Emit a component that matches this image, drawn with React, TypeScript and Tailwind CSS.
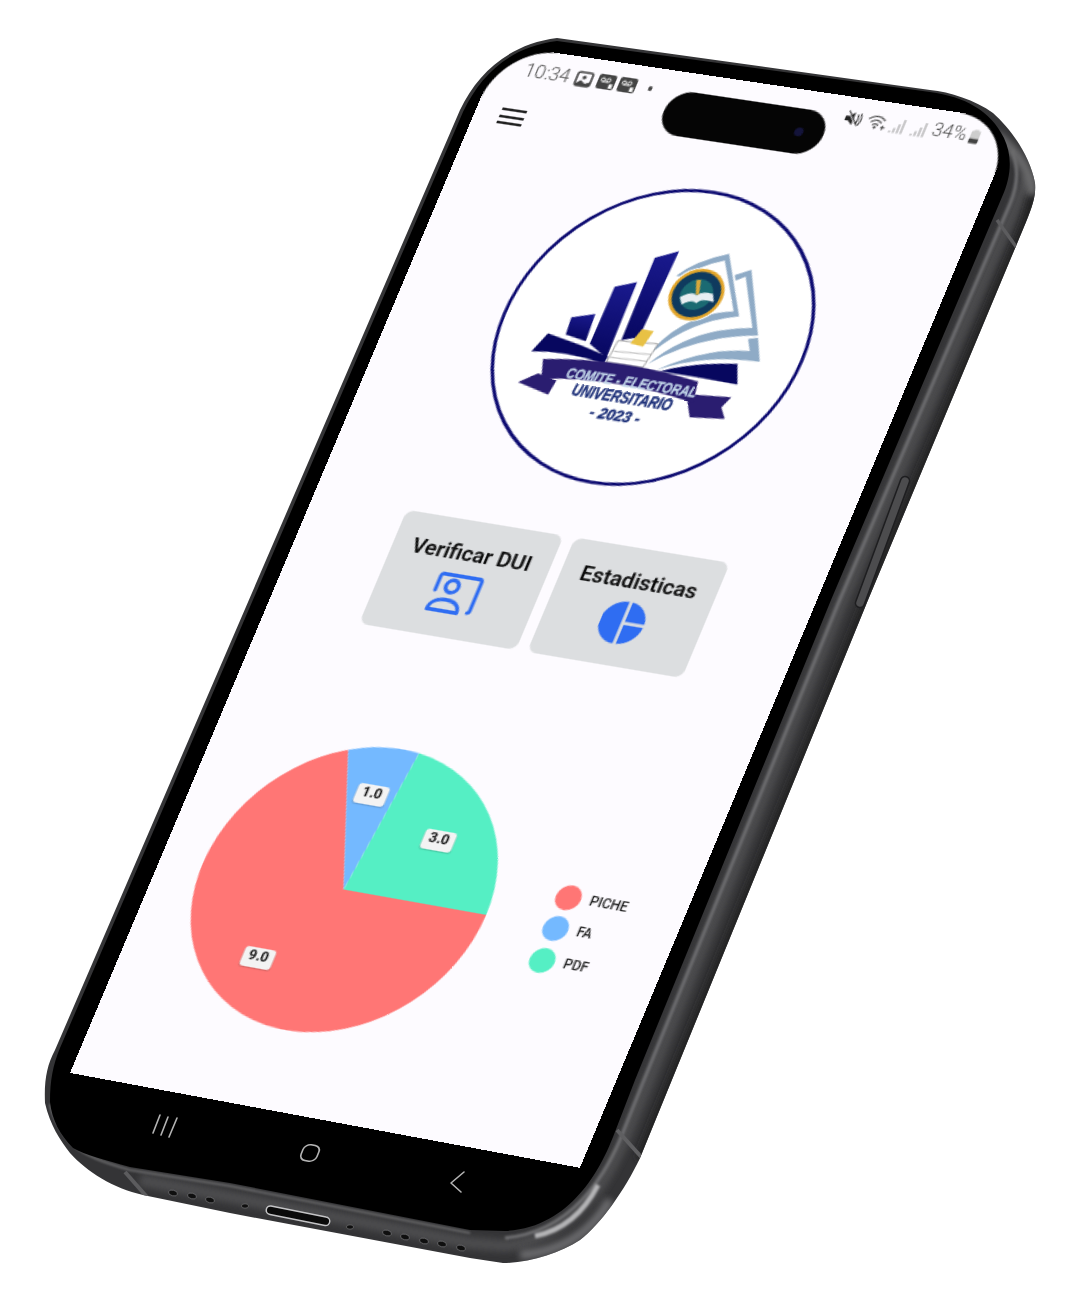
import React from "react";

const W = 412, H = 852;
const Q: number[][] = [[503, 45], [1017, 121], [580, 1168], [70, 1073]];

function solveH() {
  const [[x0, y0], [x1, y1], [x2, y2], [x3, y3]] = Q;
  const sx = x0 - x1 + x2 - x3, sy = y0 - y1 + y2 - y3;
  const dx1 = x1 - x2, dx2 = x3 - x2, dy1 = y1 - y2, dy2 = y3 - y2;
  const den = dx1 * dy2 - dx2 * dy1;
  const g = (sx * dy2 - dx2 * sy) / den, h = (dx1 * sy - sx * dy1) / den;
  return {
    a: (x1 - x0 + g * x1) / W, b: (x3 - x0 + h * x3) / H, c: x0,
    d: (y1 - y0 + g * y1) / W, e: (y3 - y0 + h * y3) / H, f: y0,
    g: g / W, h: h / H,
  };
}
const M = solveH();
const matrix = `matrix3d(${M.a},${M.d},0,${M.g},${M.b},${M.e},0,${M.h},0,0,1,0,${M.c},${M.f},0,1)`;

function inv(X: number, Y: number): [number, number] {
  const { a, b, c, d, e, f, g, h } = M;
  const A = e - f * h, B = c * h - b, C = b * f - c * e;
  const D = f * g - d, E = a - c * g, F = c * d - a * f;
  const G = d * h - e * g, I = b * g - a * h, J = a * e - b * d;
  const w = G * X + I * Y + J;
  return [(A * X + B * Y + C) / w, (D * X + E * Y + F) / w];
}

const LOGO_X = 86, LOGO_Y = 88.5;
const zp = (x: number, y: number) => {
  const [u, v] = inv(480 + x / 3, 180 + y / 3);
  return [+(u - LOGO_X).toFixed(2), +(v - LOGO_Y).toFixed(2)] as [number, number];
};
const d = (s: string) => s.replace(/(-?[\d.]+),(-?[\d.]+)/g, (_, x, y) => zp(+x, +y).join(","));

const polar = (r: number, deg: number) => {
  const t = ((deg - 90) * Math.PI) / 180;
  return `${115 + r * Math.cos(t)},${115 + r * Math.sin(t)}`;
};
const slice = (from: number, to: number) =>
  `M115,115 L${polar(115, from)} A115,115 0 ${to - from > 180 ? 1 : 0} 1 ${polar(115, to)} Z`;

function LogoText({ a, b, size, color, children }: { a: number[]; b: number[]; size: number; color: string; children: string }) {
  const [x1, y1] = zp(a[0], a[1]);
  const [x2, y2] = zp(b[0], b[1]);
  const len = Math.hypot(x2 - x1, y2 - y1);
  const ang = (Math.atan2(y2 - y1, x2 - x1) * 180) / Math.PI;
  return (
    <text
      transform={`translate(${x1} ${y1}) rotate(${ang})`}
      fontSize={size}
      fill={color}
      stroke={color}
      strokeWidth="0.4"
      textLength={len}
      lengthAdjust="spacingAndGlyphs"
    >
      {children}
    </text>
  );
}

function Logo() {
  const [sx, sy] = zp(650, 342);
  return (
    <svg viewBox="0 0 242 242" className="w-[242px] h-[242px] block">
      <circle cx="121" cy="121" r="119.5" fill="#ffffff" stroke="#0c0a70" strokeWidth="2.6" />
      <defs>
        <linearGradient id="nv" x1="0" y1="0" x2="0" y2="1">
          <stop offset="0" stopColor="#1a1a8f" />
          <stop offset="1" stopColor="#070760" />
        </linearGradient>
      </defs>
      <path d={d("M275,410 L347,400 L318,482 L258,462 Z")} fill="url(#nv)" />
      <path d={d("M405,318 L472,305 L380,532 L330,490 Z")} fill="url(#nv)" />
      <path d={d("M525,232 L598,212 L478,470 L425,478 Z")} fill="url(#nv)" />
      <path d={d("M155,512 L205,458 Q300,490 385,528 L372,548 Q260,510 155,512 Z")} fill="#07075f" />
      <path d={d("M540,572 Q650,545 773,550 L773,612 L650,590 Z")} fill="#07075f" />
      <path fill="#8fabc6" d={d("M590,285 Q650,240 748,220 L778,408 Q620,420 495,535 Q600,400 762,392 L735,240 Q660,255 610,290 Z")} />
      <path fill="#8fabc6" d={d("M765,283 L815,268 L835,465 Q650,465 505,550 Q640,440 818,442 L798,288 L768,300 Z")} />
      <path fill="#8fabc6" d={d("M805,475 L835,472 L840,544 Q680,520 530,568 Q680,500 810,512 Z")} />
      <circle cx={sx} cy={sy} r="22" fill="#ffffff" />
      <circle cx={sx} cy={sy} r="21" fill="#e2a52a" />
      <circle cx={sx} cy={sy} r="18.5" fill="#0f3a5e" />
      <circle cx={sx} cy={sy} r="12.5" fill="#1b6a72" />
      <path d={d("M600,350 Q640,330 650,345 Q665,330 700,340 L702,365 Q665,352 650,368 Q635,355 606,372 Z")} fill="#e8eef2" />
      <path d={d("M650,298 L664,298 L658,342 L648,342 Z")} fill="#d9a93a" />
      <path d={d("M415,480 L535,490 L490,560 L380,545 Z")} fill="#ffffff" stroke="#8a8a8a" strokeWidth="0.7" />
      <path d={d("M402,512 L515,522 M390,530 L500,542")} stroke="#a8a8a8" strokeWidth="0.7" fill="none" />
      <path d={d("M487,445 L522,452 L490,498 L452,488 Z")} fill="#e8c145" />
      <path fill="#2a1d70" d={d("M115,605 L175,578 L230,600 L205,642 Z")} />
      <path fill="#2a1d70" d={d("M620,640 L755,650 L725,680 L735,715 L630,710 Z")} />
      <path fill="#2a1d70" d={d("M190,535 Q420,530 655,603 L640,667 Q420,592 185,594 Z")} />
      <g fontFamily="'Liberation Sans',sans-serif" fontWeight="700" fontStyle="italic">
        <LogoText a={[256, 590]} b={[645, 650]} size={11.5} color="#c3d7ea">COMITE - ELECTORAL</LogoText>
        <LogoText a={[272, 642]} b={[570, 690]} size={13} color="#1c2f78">UNIVERSITARIO</LogoText>
        <LogoText a={[325, 708]} b={[475, 730]} size={12} color="#1c2f78">- 2023 -</LogoText>
      </g>
    </svg>
  );
}

function Box() {
  return (
    <svg viewBox="0 0 14 12" className="w-[14px] h-[12px]">
      <path d="M0 2 a2 2 0 0 1 2-2 h10 a2 2 0 0 1 2 2 v8 a2 2 0 0 1-2 2 h-10 a2 2 0 0 1-2-2 Z" fill="#444" />
      <circle cx="4" cy="4.5" r="1.5" fill="none" stroke="#fff" strokeWidth="0.9" />
      <circle cx="8.4" cy="4.5" r="1.5" fill="none" stroke="#fff" strokeWidth="0.9" />
      <path d="M4 6 H8.4" stroke="#fff" strokeWidth="0.9" />
      <rect x="9.8" y="7.4" width="2.8" height="3.6" fill="#fff" />
    </svg>
  );
}

function StatusBar() {
  return (
    <div className="flex h-[34px] items-center justify-between pl-[25px] pr-[22px] text-[#4a4a4a]">
      <div className="flex items-center">
        <span className="text-[15px] font-light w-[41px]">10:34</span>
        <div className="flex items-center gap-[3.5px]">
          <svg viewBox="0 0 14 13" className="w-[14px] h-[13px]">
            <rect x="1" y="1" width="12" height="11" rx="2" fill="none" stroke="#444" strokeWidth="1.6" />
            <circle cx="7" cy="5" r="1.6" fill="#444" />
            <path d="M1 11 L5 7.6 L9 10 L13 8 V12 H1 Z" fill="#444" />
          </svg>
          <Box />
          <Box />
          <span className="ml-[6px] w-[3.5px] h-[3.5px] rounded-full bg-[#444]" />
        </div>
      </div>
      <div className="flex items-center">
        <svg viewBox="0 0 16 14" className="w-[15px] h-[14px]">
          <path d="M1 5 H4 L8 1.5 V12.5 L4 9 H1 Z" fill="#222" />
          <path d="M2 1 L12 13" stroke="#fdfbff" strokeWidth="1.4" />
          <path d="M2.4 0.6 L12.4 12.6" stroke="#222" strokeWidth="1" />
          <path d="M10.5 3 Q13 7 10.5 11 M13 2 Q15.5 7 13 12" stroke="#222" strokeWidth="1" fill="none" />
        </svg>
        <svg viewBox="0 0 18 14" className="w-[17px] h-[14px] ml-[3px]">
          <path d="M1 5 Q8 -1 15 5 M3.4 7.4 Q8 3.4 12.6 7.4 M5.6 9.6 Q8 7.6 10.4 9.6" stroke="#444" strokeWidth="1.2" fill="none" />
          <circle cx="8" cy="11.6" r="1.2" fill="#444" />
          <path d="M14.5 9 V13 M12.8 11 H16.4" stroke="#444" strokeWidth="0.9" />
        </svg>
        <svg viewBox="0 0 14 13" className="w-[14px] h-[13px] ml-[1.5px]">
          <path d="M2 11 V12.5 M5 8.5 V12.5 M8 5 V12.5 M11 1 V12.5" stroke="#a0a0a0" strokeWidth="1.1" />
        </svg>
        <svg viewBox="0 0 14 13" className="w-[14px] h-[13px] ml-[2.5px]">
          <path d="M2 11 V12.5 M5 8.5 V12.5 M8 5 V12.5 M11 1 V12.5" stroke="#a0a0a0" strokeWidth="1.1" />
        </svg>
        <span className="text-[14.5px] font-light ml-[3px] tracking-[0.1px]">34%</span>
        <svg viewBox="0 0 10 14" className="w-[9px] h-[14px] ml-[2px]">
          <path d="M1 3 a1 1 0 0 1 1-1 h1 v-1 h4 v1 h1 a1 1 0 0 1 1 1 V12 a1 1 0 0 1-1 1 H2 a1 1 0 0 1-1-1 Z" fill="#cdcdcd" />
          <path d="M1 9 H9 V12 a1 1 0 0 1-1 1 H2 a1 1 0 0 1-1-1 Z" fill="#444" />
        </svg>
      </div>
    </div>
  );
}

function CardButton({ label, icon, width }: { label: string; icon: React.ReactNode; width: string }) {
  return (
    <div className={`${width} h-[94px] rounded-[7px] bg-[#dcdee0] flex flex-col items-center pt-[16px] gap-[7px]`}>
      <span className="text-[17px] font-semibold leading-[20px] text-[#0d0d0d]">{label}</span>
      <div className="h-[32px] flex items-center justify-center">{icon}</div>
    </div>
  );
}

const PortraitIcon = (
  <svg viewBox="0 0 37 32" className="w-[37px] h-[32px]" fill="none" stroke="#2f6df2" strokeWidth="2.9">
    <path d="M2 15 V3.5 a2 2 0 0 1 2-2 H33 a2 2 0 0 1 2 2 V27 a2 2 0 0 1-1.5 2" strokeLinecap="round" />
    <circle cx="14" cy="10.5" r="5" />
    <path d="M1.5 30.5 c0-6 5-9 12-9 s12 3 12 9 Z" strokeLinejoin="round" />
  </svg>
);
const PieIcon = (
  <svg viewBox="0 0 36 36" className="w-[35px] h-[35px]" fill="#2f6df2">
    <path d="M16.8 0.5 A17.5 17.5 0 0 0 16.8 35.5 Z" />
    <path d="M19.4 0.6 A17.5 17.5 0 0 1 35.4 16.8 H19.4 Z" />
    <path d="M19.4 19.4 H35.4 A17.5 17.5 0 0 1 19.4 35.4 Z" />
  </svg>
);

function Badge({ text, cls }: { text: string; cls: string }) {
  return (
    <span className={`absolute -translate-x-1/2 -translate-y-1/2 w-[25px] h-[16px] rounded-[3px] bg-[#f3f3f3] shadow-[0_1px_1px_rgba(0,0,0,0.15)] flex items-center justify-center text-[11px] font-bold text-[#111] ${cls}`}>
      {text}
    </span>
  );
}

function Chart() {
  return (
    <div className="flex items-center mt-[90.5px] pl-[34px]">
      <div className="relative w-[230px] h-[230px]">
        <svg viewBox="0 0 230 230" className="w-[230px] h-[230px]">
          <path d={slice(90, 339.2)} fill="#ff7675" />
          <path d={slice(339.2, 366.9)} fill="#74b9ff" />
          <path d={slice(6.9, 90)} fill="#55efc4" />
        </svg>
        <Badge text="1.0" cls="left-[106px] top-[39px]" />
        <Badge text="3.0" cls="left-[171px] top-[65px]" />
        <Badge text="9.0" cls="left-[72px] top-[179px]" />
      </div>
      <div className="flex flex-col ml-[46px] mt-[3px] gap-[5.5px] text-[10.5px] font-medium text-[#222]">
        {[["PICHE", "bg-[#ff7675]"], ["FA", "bg-[#74b9ff]"], ["PDF", "bg-[#55efc4]"]].map(([t, c]) => (
          <div key={t} className="flex items-center gap-[7px] h-[20px]">
            <span className={`w-[20px] h-[20px] rounded-full ${c}`} />
            <span>{t}</span>
          </div>
        ))}
      </div>
    </div>
  );
}

function PhoneBody() {
  const outer = "M45,1103 C44,1080 47,1065 55,1050 L460,110 C478,72 510,44 557,38 L930,90 C950,92 975,100 993,113 C1010,128 1030,155 1035,183 C1036,195 1033,205 1026,222 L868,600 L640,1158 C625,1190 600,1225 580,1240 C560,1253 530,1263 503,1263 L470,1258 L230,1213 L143,1195 C113,1188 87,1172 70,1153 C60,1140 50,1125 45,1103 Z";
  const black = "M50,1102 C50,1080 53,1065 60,1048 L463,112 C481,74 510,47 557,41 L930,92 C965,97 990,110 1004,138 C1012,155 1012,175 1002,197 L831,600 L635,1080 L613,1137 C600,1170 570,1228 505,1231 L470,1230 L230,1183 L130,1167 C105,1160 85,1155 73,1148 C60,1135 52,1120 50,1102 Z";
  return (
    <svg viewBox="0 0 1080 1302" className="absolute inset-0 w-[1080px] h-[1302px]">
      <defs>
        <clipPath id="oc"><path d={outer} /></clipPath>
        <filter id="b3" x="-20%" y="-20%" width="140%" height="140%"><feGaussianBlur stdDeviation="3" /></filter>
        <filter id="b1" x="-20%" y="-20%" width="140%" height="140%"><feGaussianBlur stdDeviation="1.2" /></filter>
      </defs>
      <path d={outer} fill="#343436" />
      <g clipPath="url(#oc)">
        <path d="M1028,175 L1014,210 L843,600 L647,1085 L624,1140 C608,1178 575,1238 505,1246 L470,1243 L230,1197 L140,1180" stroke="#4c4c4e" strokeWidth="12" fill="none" filter="url(#b3)" />
        <path d="M1012,150 C1020,170 1016,190 1010,204 L838,604 L642,1085 L620,1140 C605,1175 572,1232 505,1238" stroke="#6c6c6e" strokeWidth="3.5" fill="none" filter="url(#b1)" />
        <path d="M1036,190 L1026,225 L868,600 L640,1160" stroke="#222224" strokeWidth="10" fill="none" filter="url(#b3)" />
        <path d="M996,135 C1015,150 1032,170 1032,195" stroke="#6a6a6c" strokeWidth="10" fill="none" filter="url(#b3)" />
        <path d="M598,1185 C585,1210 565,1230 535,1236" stroke="#b4b4b6" strokeWidth="5" fill="none" filter="url(#b1)" />
        <path d="M610,1200 C590,1235 560,1252 520,1255" stroke="#6c6c6e" strokeWidth="9" fill="none" filter="url(#b3)" />
        <path d="M470,1233 L230,1186 L130,1170 C105,1163 82,1155 70,1142 C60,1130 52,1118 50,1104" stroke="#6a6a6c" strokeWidth="2" fill="none" filter="url(#b1)" />
        <path d="M997,220 L1017,248" stroke="#5c5c5e" strokeWidth="3.5" />
        <path d="M617,1130 L644,1160" stroke="#5f5f61" strokeWidth="4" />
        <path d="M125,1172 L147,1197" stroke="#5c5c5e" strokeWidth="4" />
      </g>
      <path d={black} fill="#000" />
      {/* side button */}
      <path d="M905,481 L860,603" stroke="#1e1e20" strokeWidth="10.5" strokeLinecap="round" />
      <path d="M905,481 L860,603" stroke="#4c4c4e" strokeWidth="7.5" strokeLinecap="round" />
      {/* nav icons */}
      <g stroke="#b4b4b4" strokeWidth="1.6" fill="none" strokeLinecap="round" strokeLinejoin="round">
        <path d="M160,1115 L153,1133 M168,1117 L161,1135 M177,1118 L169,1137" />
        <rect x="-8" y="-8.5" width="16" height="17" rx="6" transform="translate(310,1153) matrix(.99,.16,-.38,.92,0,0)" />
        <path d="M464,1172 L451,1183 L461,1192" />
      </g>
      {/* speaker + port */}
      <g fill="#0f0f0f" stroke="#757577" strokeWidth="0.7">
        {[[173, 1193], [192, 1196], [210, 1200], [387, 1233], [405, 1237], [424, 1241], [442, 1244], [461, 1248]].map(([x, y]) => (
          <ellipse key={x} cx={x} cy={y} rx="4.6" ry="2.8" transform={`rotate(14 ${x} ${y})`} />
        ))}
        <ellipse cx="245" cy="1206" rx="3.6" ry="2.2" />
        <ellipse cx="350" cy="1227" rx="3.6" ry="2.2" />
      </g>
      <path d="M271,1206 L326,1217 a4,4 0 0 1 -1,8.5 L270,1214.5 a4,4 0 0 1 1,-8.5 Z" fill="#0a0a0a" stroke="#c4c4c6" strokeWidth="1.5" />
    </svg>
  );
}

export default function App() {
  return (
    <div className="relative w-[1080px] h-[1302px] bg-white overflow-hidden font-[Roboto,sans-serif]">
      <PhoneBody />
      <div
        className="absolute left-0 top-0 w-[412px] h-[852px] origin-top-left bg-[#fdfbff] rounded-t-[46px] overflow-hidden"
        style={{ transform: matrix }}
      >
        <StatusBar />
        <div className="absolute left-[144px] top-[15px] w-[128px] h-[36px] rounded-full bg-[#050505] flex items-center justify-end pr-[16px]">
          <span className="w-[7px] h-[7px] rounded-full bg-[#14143a]" />
        </div>
        <div className="pl-[20px] mt-[15px] h-[13px] flex flex-col gap-[3.5px]">
          <span className="w-[20px] h-[2px] bg-[#222]" />
          <span className="w-[20px] h-[2px] bg-[#222]" />
          <span className="w-[20px] h-[2px] bg-[#222]" />
        </div>
        <div className="flex justify-center mt-[26.5px] pl-[2px]">
          <Logo />
        </div>
        <div className="flex justify-center gap-[9px] mt-[43.5px]">
          <CardButton label="Verificar DUI" icon={PortraitIcon} width="w-[127px]" />
          <CardButton label="Estadisticas" icon={PieIcon} width="w-[124px]" />
        </div>
        <Chart />
      </div>
    </div>
  );
}
